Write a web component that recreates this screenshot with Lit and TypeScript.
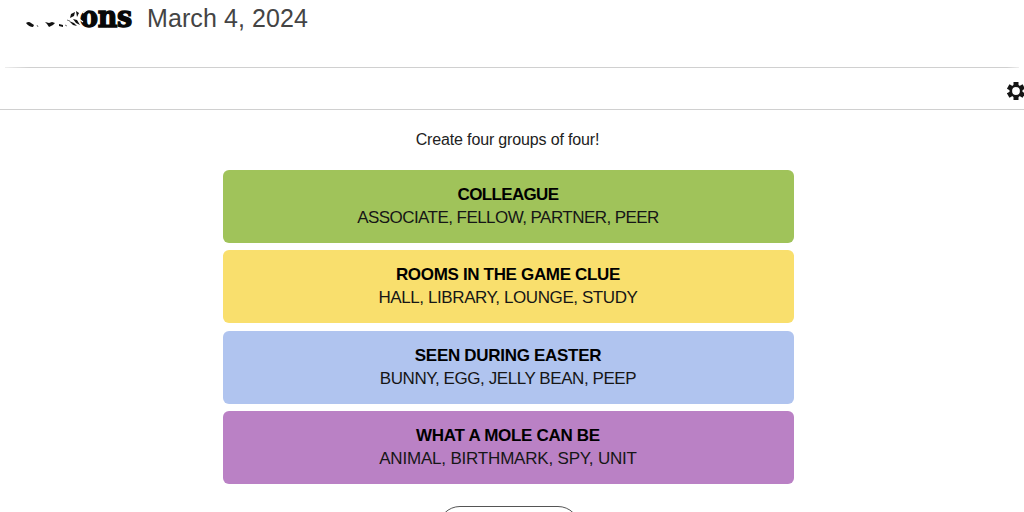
import { LitElement, html, css, svg } from "lit";
import { customElement, property } from "lit/decorators.js";
import { styleMap } from "lit/directives/style-map.js";

interface Line { text: string; spacing: number }
interface Group { title: Line; words: Line; color: string }

const GROUPS: Group[] = [
  { title: { text: "COLLEAGUE", spacing: -0.65 }, words: { text: "ASSOCIATE, FELLOW, PARTNER, PEER", spacing: -0.55 }, color: "#a0c35a" },
  { title: { text: "ROOMS IN THE GAME CLUE", spacing: -0.33 }, words: { text: "HALL, LIBRARY, LOUNGE, STUDY", spacing: -0.41 }, color: "#f9df6d" },
  { title: { text: "SEEN DURING EASTER", spacing: -0.3 }, words: { text: "BUNNY, EGG, JELLY BEAN, PEEP", spacing: -0.43 }, color: "#b0c4ef" },
  { title: { text: "WHAT A MOLE CAN BE", spacing: -0.3 }, words: { text: "ANIMAL, BIRTHMARK, SPY, UNIT", spacing: -0.19 }, color: "#ba81c5" },
];

@customElement("group-card")
class GroupCard extends LitElement {
  @property({ attribute: false }) group!: Group;
  static styles = css`
    :host { display: block; }
    .card { height: 73px; box-sizing: border-box; padding: 13px 1px 0 0; border-radius: 6px; text-align: center; font-size: 17px; line-height: 23px; color: #161616; white-space: nowrap; }
    .title { font-weight: 700; color: #000; }
  `;
  render() {
    const { title, words, color } = this.group;
    return html`<div class="card" style=${styleMap({ background: color })}>
      <div class="title" style=${styleMap({ letterSpacing: `${title.spacing}px` })}>${title.text}</div>
      <div style=${styleMap({ letterSpacing: `${words.spacing}px` })}>${words.text}</div>
    </div>`;
  }
}

@customElement("app-root")
class AppRoot extends LitElement {
  static styles = css`
    :host { display: block; height: 512px; overflow: hidden; background: #fff; color: #222; font-family: "Liberation Sans", Arial, sans-serif; }
    .header { display: flex; height: 67px; box-sizing: border-box; padding-left: 24px; }
    .scraps { width: 56px; height: 36px; flex: none; position: relative; z-index: 1; overflow: visible; }
    .brand { width: 67px; flex: none; display: flex; }
    .name { font: 700 30px/34px "DejaVu Serif Condensed", "DejaVu Serif", serif; letter-spacing: -0.3px; color: #080808; -webkit-text-stroke: 1.3px #080808; }
    .date { font-size: 25px; line-height: 37px; letter-spacing: 0.1px; color: #444; }
    .toolbar { height: 43px; box-sizing: border-box; border-bottom: 1px solid #d0d0d0; display: flex; flex-direction: column; align-items: flex-end; }
    .rule { align-self: stretch; height: 1px; margin: 0 5px; background: linear-gradient(90deg, #eee, #d0d0d0 24px, #d0d0d0 calc(100% - 12px), #eee); flex: none; }
    .gear { width: 18px; height: 20px; margin: 13px -1px 0 0; flex: none; }
    .prompt { margin: 0; height: 60px; box-sizing: border-box; padding: 19px 9px 0 0; text-align: center; font-size: 16px; line-height: 22px; letter-spacing: -0.15px; }
    .board { width: 571px; margin-left: 223px; display: grid; gap: 7.45px; }
    .button { box-sizing: border-box; width: 142px; height: 44px; margin: 21.8px 0 0 438px; border: 1px solid #555; border-radius: 22px; }
  `;
  render() {
    return html`
      <header class="header">
        <svg class="scraps" viewBox="24 0 56 36">
          <g fill="#111">
            <path d="M26 23q3-2 5 0l3 2-1 2q-4 0-7-4ZM45 22l4 1 3-1 3 1-2 2-4 2-2-3ZM59 24l4 1v2l-4-1ZM71 14l4-2-1 4-4 2ZM69 21l5 2 3 3-4-1ZM76 11l3 2-2 4ZM73 19l4 1 3 5-4-2Z"/>
            <path d="M37 25l1 2M65 25l2 1M67 20l3 1" stroke="#777" fill="none"/>
          </g>
          <path d="M79 15l5-6M79 19l4 3M83 13l5-4" stroke="#fff" stroke-width="1.2" fill="none"/>
        </svg>
        <div class="brand"><span class="name">ons</span></div>
        <div class="date">March 4, 2024</div>
      </header>
      <div class="toolbar">
        <div class="rule"></div>
        <svg class="gear" viewBox="0 0 18 20">
          ${[0, 60, 120].map((a) => svg`<path d="M9 1V19" stroke="#151515" stroke-width="5" transform="rotate(${a} 9 10)"/>`)}
          <circle cx="9" cy="10" r="5.2" fill="#fff" stroke="#151515" stroke-width="2.6"/>
        </svg>
      </div>
      <p class="prompt">Create four groups of four!</p>
      <main class="board">${GROUPS.map((g) => html`<group-card .group=${g}></group-card>`)}</main>
      <div class="button"></div>
    `;
  }
}
